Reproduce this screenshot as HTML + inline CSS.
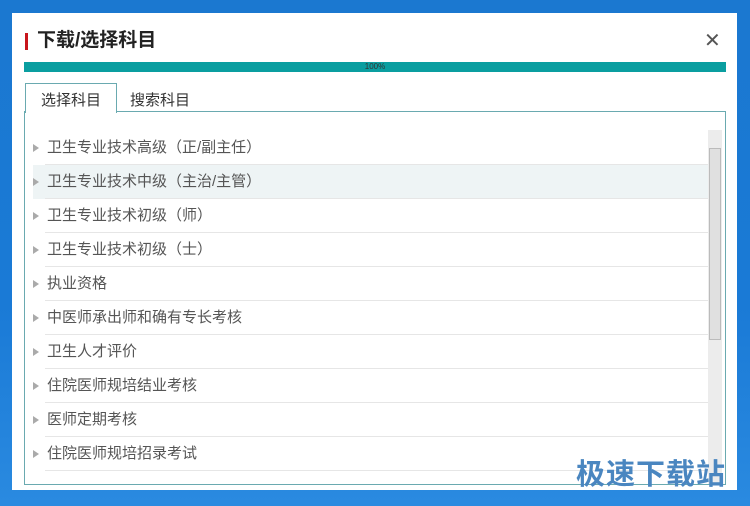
<html><head><style>
body{margin:0;width:750px;height:506px;overflow:hidden;background:linear-gradient(180deg,#1b78d0,#1a7ad6 60%,#2a8ae0);font-family:"Liberation Sans","Noto Sans CJK SC",sans-serif;position:relative}
.win{position:absolute;left:12px;top:13px;width:725px;height:477px;background:#fff}
.t{position:absolute;left:25px;top:15px;font-size:19px;font-weight:bold;color:#222;line-height:26px}
.t:before{content:"";position:absolute;left:-12px;top:5px;width:3px;height:17px;background:#c8161d}
.x{position:absolute;left:692px;top:15px;font-size:20px;color:#555}
.pb{position:absolute;left:12px;top:49px;width:702px;height:10px;background:#0a9ea0;font-size:8px;line-height:10px;text-align:center;color:#333}
.tab1{position:absolute;left:13px;top:70px;width:90px;height:29px;border:1px solid #6aaab0;border-bottom:none;background:#fff;z-index:2;font-size:15px;line-height:33px;text-align:center;color:#333}
.tab2{position:absolute;left:118px;top:71px;font-size:15px;line-height:33px;color:#333}
.box{position:absolute;left:12px;top:98px;width:700px;height:372px;border:1px solid #6aaab0;overflow:hidden}
.row{position:absolute;left:8px;width:675px;height:34px;font-size:15px;line-height:34px;color:#555}
.row:after{content:"";position:absolute;left:12px;right:0;bottom:0;height:1px;background:#e6e6e6}
.row span{position:absolute;left:14px}
.row:before{content:"";position:absolute;left:0;top:13px;border-left:6px solid #aaa;border-top:4px solid transparent;border-bottom:4px solid transparent}
.sb{position:absolute;left:683px;top:18px;width:14px;height:354px;background:#ececec}
.th{position:absolute;left:684px;top:36px;width:12px;height:192px;background:#e0e0e0;border:1px solid #bbb;box-sizing:border-box}
.wm{position:absolute;left:576px;top:458px;font-size:29px;line-height:34px;font-weight:bold;color:#4a86c0;letter-spacing:1px}
</style></head><body>
<div class="win">
<div class="t">下载/选择科目</div><div class="x">✕</div>
<div class="pb">100%</div>
<div class="tab1">选择科目</div><div class="tab2">搜索科目</div>
<div class="box">
<div class="row" style="top:19px"><span>卫生专业技术高级（正/副主任）</span></div>
<div class="row" style="top:53px;background:#eef4f5"><span>卫生专业技术中级（主治/主管）</span></div>
<div class="row" style="top:87px"><span>卫生专业技术初级（师）</span></div>
<div class="row" style="top:121px"><span>卫生专业技术初级（士）</span></div>
<div class="row" style="top:155px"><span>执业资格</span></div>
<div class="row" style="top:189px"><span>中医师承出师和确有专长考核</span></div>
<div class="row" style="top:223px"><span>卫生人才评价</span></div>
<div class="row" style="top:257px"><span>住院医师规培结业考核</span></div>
<div class="row" style="top:291px"><span>医师定期考核</span></div>
<div class="row" style="top:325px"><span>住院医师规培招录考试</span></div>
<div class="sb"></div><div class="th"></div>
</div></div>
<div class="wm">极速下载站</div>
</body></html>
